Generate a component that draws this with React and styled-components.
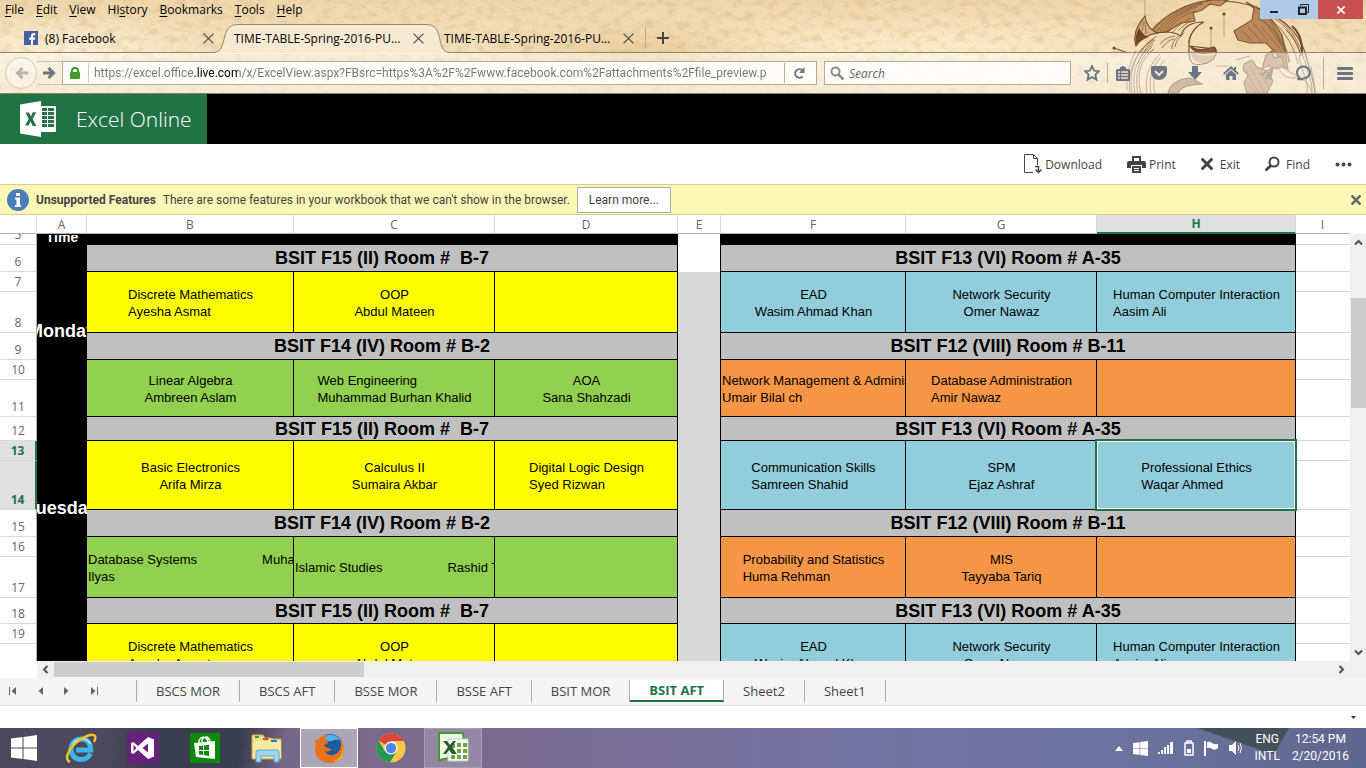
import React from "react";
import styled, { createGlobalStyle, css } from "styled-components";

const UI = `"Open Sans", "Noto Sans", sans-serif`;
const NARROW = `Roboto, "Open Sans", sans-serif`;
const GREEN = "#217346";
const COLORS = { yellow: "#ffff00", green: "#92d050", blue: "#92cddc", orange: "#f79646" };

const Global = createGlobalStyle`
  *, *::before, *::after { box-sizing: border-box; }
  body { margin: 0; background: #fff; font-family: ${UI}; font-size: 12px; color: #444; }
  button, input { font: inherit; color: inherit; }
  button { border: 0; padding: 0; background: none; }
  svg { display: block; flex: none; }
`;

const Page = styled.div`
  display: flex;
  flex-direction: column;
  height: 100vh;
  overflow: hidden;
`;

/* ---------- browser chrome ---------- */
const Chrome = styled.header`
  position: relative;
  flex: none;
  border-bottom: 1px solid #8f8063;
  background:
    radial-gradient(ellipse 160px 40px at 640px 56px, rgba(214, 164, 88, 0.3), transparent),
    radial-gradient(ellipse 160px 40px at 60px 50px, rgba(255, 248, 228, 0.6), transparent),
    radial-gradient(ellipse 300px 40px at 930px 50px, rgba(255, 244, 212, 0.6), transparent),
    linear-gradient(#efd6ac, #f3dfba 45%, #f0dcb6);
`;
const Grain = styled.svg`
  position: absolute;
  inset: 0;
  width: 100%;
  height: 100%;
`;
const Artwork = styled.svg`
  position: absolute;
  top: 0;
  right: 0;
`;
const WindowControls = styled.div`
  position: absolute;
  z-index: 2;
  top: 0;
  right: 3px;
  display: flex;
  height: 19px;
`;
const WindowButton = styled.button`
  display: grid;
  place-items: center;
  width: ${(p) => (p.$close ? 45 : 29)}px;
  background: ${(p) => (p.$close ? "#c75050" : "#aecae8")};
`;
const MenuBar = styled.nav`
  position: relative;
  display: flex;
  gap: 12px;
  height: 24px;
  padding: 2px 5px;
  color: #000;
`;
const MenuItem = styled.button`
  height: 16px;
  line-height: 16px;
  u { text-underline-offset: 2px; }
`;
const TabStrip = styled.div`
  position: relative;
  display: flex;
  height: 29px;
  padding-left: 15px;
  border-bottom: 1px solid #94866c;
  color: #000;
`;
const BrowserTab = styled.div`
  position: relative;
  display: flex;
  align-items: center;
  justify-content: space-between;
  width: 210px;
  padding: 0 11px 0 9px;
`;
const TabShape = styled.svg`
  position: absolute;
  left: -12px;
  top: 0;
`;
const TabTitle = styled.button`
  position: relative;
  display: flex;
  align-items: center;
  gap: 7px;
  white-space: nowrap;
`;
const IconButton = styled.button`
  position: relative;
  display: grid;
  place-items: center;
`;
const NewTab = styled.button`
  display: flex;
  align-items: center;
  gap: 11px;
`;
const NavBar = styled.div`
  position: relative;
  display: flex;
  align-items: center;
  height: 40px;
  padding-right: 13px;
  background: rgba(255, 255, 255, 0.45);
`;
const BackButton = styled.button`
  display: grid;
  place-items: center;
  width: 32px;
  height: 32px;
  margin-left: 5px;
  border: 1px solid #d5cab6;
  border-radius: 50%;
  background: rgba(255, 255, 255, 0.3);
`;
const Forward = styled.button`
  display: grid;
  place-items: center;
  width: 25px;
  height: 24px;
  border: solid #cfc4b0;
  border-width: 1px 0;
`;
const Field = styled.div`
  display: flex;
  align-items: center;
  height: 24px;
  border: 1px solid #b5aa96;
  background: rgba(255, 255, 255, 0.85);
`;
const UrlField = styled(Field)`
  flex: 1;
  min-width: 0;
  padding: 0 10px 0 7px;
  gap: 8px;
`;
const UrlInput = styled.input`
  flex: 1;
  min-width: 0;
  height: 20px;
  padding: 0 0 0 5px;
  border: 0;
  border-left: 1px solid #ccc;
  outline: 0;
  font-family: ${NARROW};
  color: transparent;
  background: linear-gradient(90deg, #777 0 104px, #000 104px 149px, #777 149px);
  background-clip: text;
  -webkit-background-clip: text;
`;
const SearchField = styled(Field)`
  width: 247px;
  margin-left: 7px;
  padding: 0 5px;
  gap: 5px;
`;
const SearchInput = styled.input`
  flex: 1;
  min-width: 0;
  border: 0;
  outline: 0;
  padding: 0;
  background: transparent;
  font-style: italic;
  &::placeholder { color: #666; opacity: 1; }
`;
const Tools = styled.div`
  display: flex;
  align-items: center;
  gap: 7px;
  margin-left: 13px;
  color: #6c7683;
`;
const ToolGroup = styled.div`
  display: flex;
  align-items: center;
  gap: 20px;
  margin-right: 5px;
`;
const Tool = styled(IconButton)`
  width: 16px;
  &:last-child { margin-left: ${(p) => (p.$menu ? 6 : 0)}px; }
`;
const Rule = styled.span`
  width: 1px;
  height: ${(p) => p.$h || 20}px;
  background: #b8ad99;
`;

/* ---------- Excel header ---------- */
const Brand = styled.div`
  display: flex;
  flex: none;
  height: 50px;
  background: #000;
`;
const BrandLink = styled.a`
  display: flex;
  align-items: center;
  gap: 20px;
  width: 207px;
  padding-left: 20px;
  background: ${GREEN};
  color: #fff;
  font-size: 21px;
  font-weight: 300;
  text-decoration: none;
  white-space: nowrap;
`;
const Commands = styled.div`
  display: flex;
  flex: none;
  justify-content: flex-end;
  align-items: center;
  gap: 25px;
  height: 40px;
  padding-right: 14px;
`;
const Command = styled.button`
  display: flex;
  align-items: center;
  gap: ${(p) => p.$gap || 3}px;
`;
const Notice = styled.div`
  display: flex;
  flex: none;
  align-items: center;
  height: 31px;
  padding: 0 5px 0 7px;
  border: solid #d8d282;
  border-width: 1px 0;
  background: #fcf7b6;
  gap: 7px;
  font-family: ${NARROW};
  white-space: nowrap;
`;
const Learn = styled.button`
  width: 94px;
  height: 26px;
  border: 1px solid #ababab;
  background: #fff;
`;
const Spacer = styled.span`
  flex: 1;
`;

/* ---------- worksheet ---------- */
const Sheet = styled.main`
  display: flex;
  flex: 1;
  min-height: 0;
  overflow: hidden;
`;
const Viewport = styled.div`
  flex: 1;
  min-width: 0;
  overflow: hidden;
`;
const Grid = styled.table`
  width: 100%;
  table-layout: fixed;
  border-collapse: separate;
  border-spacing: 0;
`;
const Row = styled.tr`
  height: ${(p) => p.$h}px;
`;
const head = css`
  padding: 0;
  font-weight: ${(p) => (p.$on ? 700 : 400)};
  color: ${(p) => (p.$on ? GREEN : "#666")};
  background: ${(p) => (p.$on ? "#e0e0e0" : "#fff")};
`;
const ColHead = styled.th`
  ${head}
  height: 19px;
  line-height: 17px;
  border-right: 1px solid ${(p) => (p.$last ? "transparent" : "#d9d9d9")};
  border-bottom: ${(p) => (p.$on ? `2px solid ${GREEN}` : "1px solid #b1b1b1")};
`;
const RowHead = styled.th`
  ${head}
  vertical-align: bottom;
  border-bottom: 1px solid #d9d9d9;
  border-right: ${(p) => (p.$on ? `2px solid ${GREEN}` : "1px solid #ababab")};
`;
const RowNumber = styled.div`
  display: flex;
  align-items: flex-end;
  justify-content: center;
  height: ${(p) => Math.min(p.$h - 1, 18)}px;
  overflow: hidden;
  line-height: 18px;
`;
const cellFont = css`
  font-family: "Liberation Sans", Arial, sans-serif;
  color: #000;
`;
const Day = styled.td`
  ${cellFont}
  padding: 0;
  background: #000;
  color: #fff;
  font-weight: 700;
`;
const DayText = styled.div`
  display: flex;
  align-items: flex-end;
  justify-content: center;
  height: ${(p) => (p.$clip ? 10 : 20)}px;
  overflow: hidden;
  font-size: ${(p) => (p.$clip ? 14 : 18)}px;
  line-height: ${(p) => (p.$clip ? 16 : 20)}px;
  white-space: nowrap;
`;
const Band = styled.td`
  padding: 0;
  background: #000;
`;
const Title = styled.td`
  ${cellFont}
  padding: 0;
  border: solid #000;
  border-width: 0 1px 1px 0;
  background: #c0c0c0;
  font-size: 18px;
  font-weight: 700;
  line-height: 20px;
  text-align: center;
  white-space: pre;
`;
const Cell = styled.td`
  ${cellFont}
  position: relative;
  padding: 1px 0 0 1px;
  border: solid #000;
  border-width: 0 1px 1px 0;
  background: ${(p) => COLORS[p.$color]};
  font-size: 13px;
  line-height: 17px;
  ${(p) => p.$selected && css`
    &::after {
      content: "";
      position: absolute;
      inset: -2px;
      border: 2px solid ${GREEN};
      box-shadow: inset 0 0 0 1px #fff;
    }
  `}
`;
const CellText = styled.div`
  display: flex;
  justify-content: ${(p) => (p.$align === "left" ? "flex-start" : "center")};
  overflow: hidden;
  text-align: ${(p) => (p.$align === "center" ? "center" : "left")};
  white-space: pre;
`;
const Wide = styled.span`
  display: flex;
  gap: 65px;
`;
const Gap = styled.td`
  padding: 0;
  border-right: 1px solid #000;
  background: ${(p) => (p.$shade ? "#d9d9d9" : "#fff")};
`;
const Blank = styled.td`
  padding: 0;
  border-bottom: 1px solid #d4d4d4;
`;
const VScroll = styled.div`
  display: flex;
  flex: none;
  flex-direction: column;
  align-items: center;
  justify-content: space-between;
  width: 16px;
  margin-top: 19px;
  padding: 5px 0;
  background: #f0f0f0;
`;
const VThumb = styled.div`
  width: 15px;
  height: 110px;
  margin-bottom: 189px;
  background: #cdcdcd;
`;
const HScroll = styled.div`
  display: flex;
  flex: none;
  align-items: center;
  height: 17px;
  margin-left: 37px;
  padding: 1px 20px 1px 4px;
  gap: 4px;
  background: #f0f0f0;
`;
const HThumb = styled.div`
  width: 310px;
  height: 15px;
  background: #cdcdcd;
`;
const SheetTabs = styled.div`
  display: flex;
  flex: none;
  height: 28px;
  padding-top: 2px;
  border-bottom: 1px solid #e1e1e1;
  background: #f5f5f5;
`;
const SheetNav = styled.div`
  display: flex;
  align-items: center;
  justify-content: space-between;
  width: 137px;
  height: 22px;
  padding: 0 38px 0 9px;
  border-right: 1px solid #ababab;
`;
const SheetTab = styled.button`
  height: 22px;
  padding: 0 19px;
  border-right: 1px solid #ababab;
  font-size: 13px;
  line-height: 20px;
  ${(p) => p.$on && css`
    border-bottom: 2px solid ${GREEN};
    background: #fff;
    color: ${GREEN};
    font-weight: 700;
  `}
`;
const Status = styled.div`
  display: flex;
  flex: none;
  align-items: center;
  justify-content: flex-end;
  height: 22px;
  padding-right: 10px;
`;

/* ---------- taskbar ---------- */
const Taskbar = styled.footer`
  position: relative;
  display: flex;
  flex: none;
  align-items: stretch;
  justify-content: space-between;
  height: 40px;
  background:
    linear-gradient(100deg, rgba(72, 70, 88, 0.9) 0 110px, rgba(52, 58, 72, 0.9) 150px 240px, transparent 285px),
    linear-gradient(90deg, #6d6480, #7a6a8c 30%, #7572a0 60%, #6d74a0 80%, #5f668e);
  &::before {
    content: "";
    position: absolute;
    top: 0;
    right: 77px;
    width: 92px;
    height: 26px;
    background: #44505c;
    clip-path: polygon(0 0, 100% 0, 84% 100%, 76% 92%);
  }
`;
const Apps = styled.div`
  display: flex;
  gap: 4px;
`;
const AppButton = styled.button`
  display: grid;
  place-items: center;
  width: ${(p) => (p.$start ? 48 : 58)}px;
  ${(p) => p.$open && css`
    border: 1px solid ${p.$active ? "#fff" : "#a29fb4"};
    background: ${p.$active ? "rgba(255,255,255,.4)" : "rgba(255,255,255,.2)"};
  `}
`;
const Tray = styled.div`
  position: relative;
  display: flex;
  align-items: center;
  gap: 10px;
  padding-right: 17px;
  color: #fff;
  font-family: ${NARROW};
`;
const TrayText = styled.div`
  line-height: 17px;
  text-align: center;
  padding-left: 2px;
`;

/* ---------- icons ---------- */
const Cross = ({ s = 11, w = 1, c = "#444" }) => (
  <svg width={s} height={s} viewBox="0 0 10 10" stroke={c} strokeWidth={w} fill="none"><path d="M.5.5l9 9M9.5.5l-9 9" /></svg>
);
const Arrow = ({ flip, c }) => (
  <svg width="13" height="12" viewBox="0 0 13 12" fill="none" stroke={c} strokeWidth="3">
    {flip ? <path d="M13 6H3M7.500 1l-5 5 5 5" /> : <path d="M0 6h10M5.500 1l5 5-5 5" />}
  </svg>
);
const Chevron = ({ r = 0 }) => (
  <svg width="9" height="7" viewBox="0 0 9 7" fill="none" stroke="#505050" strokeWidth="2" transform={`rotate(${r})`}><path d="M1 5.500l3.500-3.500L8 5.500" /></svg>
);
const Triangle = ({ left, bar }) => (
  <svg width="8" height="8" viewBox="0 0 8 8" fill="#666">
    {left ? <path d="M7 0v8L2.500 4z" /> : <path d="M1 0v8l4.500-4z" />}
    {bar && <rect x={left ? 0 : 7} width="1" height="8" />}
  </svg>
);
const WinLogo = ({ s }) => (
  <svg width={s} height={s} viewBox="0 0 26 26" fill="#fff">
    <path d="M0 3.500L11.500 2v10.500H0zM12.500 1.900L26 0v12.500H12.500zM0 13.500h11.500V24L0 22.500zM12.500 13.500H26V26l-13.500-1.900z" />
  </svg>
);

function Paper() {
  return (
    <Grain aria-hidden="true">
      <filter id="grain" x="0" y="0" width="100%" height="100%">
        <feTurbulence type="fractalNoise" baseFrequency="0.09 0.14" numOctaves="5" seed="7" />
        <feColorMatrix values="0 0 0 0 .62  0 0 0 0 .42  0 0 0 0 .18  1 0 0 0 -.46" />
      </filter>
      <rect width="100%" height="100%" filter="url(#grain)" />
    </Grain>
  );
}

function Globe() {
  return (
    <Artwork width="260" height="93" viewBox="1106 0 260 93" fill="none" stroke="#7d5431" strokeWidth="1.100" aria-hidden="true">
      <path d="M1136 93c-3-22 4-45 21-60C1176 10 1200 0 1224 0h30c30 8 52 28 52 60v33z" fill="#f3dcb4" fillOpacity=".5" stroke="none" />
      <path d="M1150 32C1164 14 1190 1 1214 0h14l-8 6-10-2-8 6-9 3 2 8-14 2-14 9-16 1z" fill="#c08d5a" />
      <path d="M1154 29c14-15 32-25 54-28M1157 31c12-15 27-24 46-28M1160 31c12-14 26-23 42-27M1164 31c9-12 20-20 33-24M1167 31c8-10 17-17 29-20M1173 32c5-6 11-11 18-14M1178 31c4-4 8-8 14-10" strokeWidth=".7" />
      <path d="M1224 1c22 1 44 9 61 22 11 9 18 20 22 36 3 14 7 22 8 34" />
      <path d="M1246 2l8 6-2 12-8 5-10 6 4 9 12 3 16 0 10 10 6 14 6 2-6-34-14-21z" fill="#b8895c" />
      <path d="M1250 5l12 12M1256 5l14 18M1254 24l14 17M1248 27l14 15M1242 31l10 10M1262 28l18 20M1264 20l18 26M1270 20l14 30" strokeWidth=".6" />
      <path d="M1258 18c16 9 28 25 31 45M1262 14c17 9 31 27 36 50M1270 14c19 9 30 28 34 46M1282 36l8 26M1272 17c16 9 25 24 29 39M1286 30c8 8 13 17 15 26" strokeWidth=".8" />
      <path d="M1292 26c8 7 11 18 10 28" stroke="#6f4626" strokeWidth="2" />
      <path d="M1136 46c-3-10 0-20 9-30 1 9 5 13 12 17-10 2-16 6-21 13z" fill="#d7b182" stroke="#6f4626" />
      <path d="M1136 45c-1-7 0-12 3-17 3 4 5 8 10 9-6 2-10 4-13 8z" fill="#6f4626" stroke="none" />
      <path d="M1139 28l4-9M1142 31l2-10M1146 34l-1-12" strokeWidth=".7" />
      <path d="M1157 33c9-2 16-2 24 3 2-8 9-14 23-14-12 6-16 17-15 24l26 3c4 4-2 14-13 15-9 2-14 0-13-18" stroke="#6f4626" />
      <path d="M1190 46c6 5 15 4 24 1 4 3 1 6-3 6-8 1-16 1-21-7z" fill="#8a5a38" stroke="#6f4626" />
      <path d="M1191 51c0 8 4 12 12 12 6 0 11-5 12-9-8 3-17 2-24-3z" fill="#c9a27a" stroke="none" />
      <path d="M1130 93c-3-22 5-43 27-57M1132 93c-4-20 3-41 22-54M1135 93c-4-21 2-36 18-49M1138 93c-4-19 1-34 14-46M1141 93c-5-19 0-34 13-44M1147 93c-3-16 3-29 13-39M1151 93c-3-14 1-26 10-36M1155 93c-4-12 1-24 10-33M1138 64c3-10 9-18 17-24M1127 90c-1-12 2-27 9-39M1180 35c-6 4-8 9-8 14M1184 33c-6 5-8 9-9 14M1196 28c-5 5-7 11-7 16M1199 25c-6 5-9 11-10 17M1160 44c4-5 9-7 15-8M1162 48c4-5 7-8 12-9" strokeWidth=".8" />
      <path d="M1168 93c2-9 10-14 22-15l12 6-10 1c-8 1-12 4-14 8z" fill="#a98262" />
      <path d="M1266 55l6-4 2 7 8-2 2 10-8 3-8-3-6 3zM1244 64l8-4 5 7 10 4 6 10-6 12h-20l-3-10 4-8-5-5z" fill="#bd946e" stroke="#8a5f38" />
      <path d="M1250 66l14 26M1246 70l12 22M1256 66l14 24M1248 84l8 9" strokeWidth=".5" />
      <path d="M1299 55c2 17 10 25 8 38M1305 60c2 14 8 22 7 33M1311 66c1 12 5 18 4 27M1276 66c6 8 10 12 16 12 8-1 16 2 20 14M1280 64c6 6 12 10 18 12M1216 66l12 0M1236 60l14-4" strokeWidth=".8" />
      <path d="M1145 0v16M1211 28v22M1224 15v22" stroke="#a8865d" strokeWidth=".7" />
      <g fill="#6f4626" stroke="none"><circle cx="1211" cy="28" r="1.500" /><circle cx="1224" cy="14" r="1.500" /><circle cx="1114" cy="48" r="1.500" /></g>
      <path d="M1114 48l14 5" />
    </Artwork>
  );
}

/* ---------- timetable data ---------- */
const t = (a, b, align = "center") => ({ lines: [a, b], align });
const none = null;
const f15 = "BSIT F15 (II) Room #  B-7";
const f14 = "BSIT F14 (IV) Room # B-2";
const f13 = "BSIT F13 (VI) Room # A-35";
const f12 = "BSIT F12 (VIII) Room # B-11";
const monF15 = [t("Discrete Mathematics", "Ayesha Asmat", "block"), t("OOP", "Abdul Mateen"), none];
const monF13 = [t("EAD", "Wasim Ahmad Khan"), t("Network Security", "Omer Nawaz"), t("Human Computer Interaction", "Aasim Ali", "block")];

const BLOCKS = [
  { n: 6, h: [27, 20, 41], titles: [f15, f13], colors: ["yellow", "blue"], cells: [monF15, monF13], day: "Monday" },
  {
    n: 9, h: [27, 20, 37], titles: [f14, f12], colors: ["green", "orange"],
    cells: [
      [t("Linear Algebra", "Ambreen Aslam"), t("Web Engineering", "Muhammad Burhan Khalid", "block"), t("AOA", "Sana Shahzadi")],
      [t("Network Management & Administ", "Umair Bilal ch", "left"), t("Database Administration", "Amir Nawaz", "block"), none],
    ],
  },
  {
    n: 12, h: [24, 20, 49], titles: [f15, f13], colors: ["yellow", "blue"], day: "Tuesday", selected: true,
    cells: [
      [t("Basic Electronics", "Arifa Mirza"), t("Calculus II", "Sumaira Akbar"), t("Digital Logic Design", "Syed Rizwan", "block")],
      [t("Communication Skills", "Samreen Shahid", "block"), t("SPM", "Ejaz Ashraf"), t("Professional Ethics", "Waqar Ahmed", "block")],
    ],
  },
  {
    n: 15, h: [27, 20, 41], titles: [f14, f12], colors: ["green", "orange"],
    cells: [
      [
        { lines: [<Wide key="w"><span>Database Systems</span><span>Muha</span></Wide>, "Ilyas"], align: "left" },
        { lines: [<Wide key="w"><span>Islamic Studies</span><span>Rashid T</span></Wide>], align: "left" },
        none,
      ],
      [t("Probability and Statistics", "Huma Rehman", "block"), t("MIS", "Tayyaba Tariq"), none],
    ],
  },
  { n: 18, h: [26, 20, 41], titles: [f15, f13], colors: ["yellow", "blue"], cells: [monF15, monF13], day: "" },
];
const COLS = ["A", "B", "C", "D", "E", "F", "G", "H", "I"];
const WIDTHS = [37, 50, 207, 201, 183, 43, 185, 191, 199];

function Entry({ data, color, selected }) {
  return (
    <Cell rowSpan={2} $color={color} $selected={selected}>
      {data && (
        <CellText $align={data.align}>
          <div>{data.lines.map((line, i) => <div key={i}>{line}</div>)}</div>
        </CellText>
      )}
    </Cell>
  );
}

function NumberCell({ n, h, on }) {
  const empty = n === 20;
  return <RowHead scope="row" $on={on}><RowNumber $h={h}>{empty ? "" : n}</RowNumber></RowHead>;
}

function Block({ b, first }) {
  const [h0, h1, h2] = b.h;
  return (
    <>
      <Row $h={h0}>
        <NumberCell n={b.n} h={h0} />
        {b.day !== undefined && <Day rowSpan={b.day ? 6 : 3}><DayText>{b.day}</DayText></Day>}
        <Title colSpan={3}>{b.titles[0]}</Title>
        {first && <Gap />}
        <Title colSpan={3}>{b.titles[1]}</Title>
        <Blank />
      </Row>
      <Row $h={h1}>
        <NumberCell n={b.n + 1} h={h1} on={b.selected} />
        {b.cells[0].map((c, i) => <Entry key={i} data={c} color={b.colors[0]} />)}
        {first && <Gap $shade rowSpan={14} />}
        {b.cells[1].map((c, i) => <Entry key={i} data={c} color={b.colors[1]} selected={b.selected && i === 2} />)}
        <Blank />
      </Row>
      <Row $h={h2}>
        <NumberCell n={b.n + 2} h={h2} on={b.selected} />
        <Blank />
      </Row>
    </>
  );
}

function Worksheet() {
  return (
    <Grid>
      <colgroup>
        {WIDTHS.map((w, i) => <col key={i} width={w} />)}
        <col />
      </colgroup>
      <thead>
        <tr>
          <ColHead as="td" />
          {COLS.map((c) => <ColHead key={c} scope="col" $on={c === "H"} $last={c === "I"}>{c}</ColHead>)}
        </tr>
      </thead>
      <tbody>
        <Row $h={11}>
          <NumberCell n={5} h={11} />
          <Day><DayText $clip>Time</DayText></Day>
          <Band colSpan={3} />
          <Gap />
          <Band colSpan={3} />
          <Blank />
        </Row>
        {BLOCKS.map((b, i) => <Block key={b.n} b={b} first={i === 0} />)}
      </tbody>
    </Grid>
  );
}

function BrowserChrome() {
  const menus = ["File", "Edit", "View", "Hi|story", "Bookmarks", "Tools", "Help"];
  return (
    <Chrome>
      <Paper />
      <Globe />
      <WindowControls>
        <WindowButton aria-label="Minimize"><svg width="9" height="9"><rect y="6" width="8" height="2" fill="#222" /></svg></WindowButton>
        <WindowButton aria-label="Restore"><svg width="11" height="11" fill="none" stroke="#222"><path d="M2.500 2V.5h8v8H9" /><path d="M1 3.500h7v6.500H1z" strokeWidth="2" /></svg></WindowButton>
        <WindowButton $close aria-label="Close"><Cross s={8} w={2} c="#fff" /></WindowButton>
      </WindowControls>
      <MenuBar>
        {menus.map((m) => {
          const [a, b] = m.includes("|") ? m.split("|") : ["", m];
          return <MenuItem key={m}>{a}<u>{b[0]}</u>{b.slice(1)}</MenuItem>;
        })}
      </MenuBar>
      <TabStrip>
        <BrowserTab>
          <TabTitle>
            <svg width="14" height="14"><rect width="14" height="14" fill="#4460a0" /><path d="M9 14V8.700h1.900l.3-2.100H9V5.300c0-.7.200-1.100 1.200-1.100h1.100V2.200c-2.600-.4-4.300.3-4.300 2.700v1.700H5.200v2.100H7V14z" fill="#fff" /></svg>
            (8) Facebook
          </TabTitle>
          <IconButton aria-label="Close tab"><Cross /></IconButton>
        </BrowserTab>
        <BrowserTab>
          <TabShape width="237" height="30" viewBox="0 0 237 30" aria-hidden="true">
            <path d="M0 28.500C16 28.500 6 .5 24 .5h190c18 0 8 28 23 28V30H0z" fill="#f6ead3" />
            <path d="M0 28.500C16 28.500 6 .5 24 .5h190c18 0 8 28 23 28" fill="none" stroke="#94866c" />
          </TabShape>
          <TabTitle>TIME-TABLE-Spring-2016-PU...</TabTitle>
          <IconButton aria-label="Close tab"><Cross /></IconButton>
        </BrowserTab>
        <BrowserTab>
          <TabTitle>TIME-TABLE-Spring-2016-PU...</TabTitle>
          <IconButton aria-label="Close tab"><Cross /></IconButton>
        </BrowserTab>
        <NewTab aria-label="New tab"><Rule $h={22} /><svg width="12" height="12"><path d="M6 0v12M0 6h12" stroke="#444" strokeWidth="2" /></svg></NewTab>
      </TabStrip>
      <NavBar>
        <BackButton aria-label="Back"><Arrow flip c="#b9b4ab" /></BackButton>
        <Forward aria-label="Forward"><Arrow c="#6c7683" /></Forward>
        <UrlField>
          <svg width="10" height="12"><path d="M2 6V4a3 3 0 0 1 6 0v2" fill="none" stroke="#3f9c2b" strokeWidth="2" /><rect y="5" width="10" height="7" rx="1" fill="#3f9c2b" /></svg>
          <UrlInput aria-label="Address" defaultValue="https://excel.office.live.com/x/ExcelView.aspx?FBsrc=https%3A%2F%2Fwww.facebook.com%2Fattachments%2Ffile_preview.p" />
          <Rule />
          <IconButton aria-label="Reload">
            <svg width="13" height="13" viewBox="0 0 13 13"><path d="M9.500 9.500A4.300 4.300 0 1 1 9.300 3.200" fill="none" stroke="#777" strokeWidth="2" /><path d="M11.500 0v6H6z" fill="#777" /></svg>
          </IconButton>
        </UrlField>
        <SearchField>
          <svg width="14" height="14" fill="none" stroke="#8a8a8a"><circle cx="5.500" cy="5.500" r="4" strokeWidth="2" /><path d="M8.500 8.500l5 5" strokeWidth="2.500" /></svg>
          <SearchInput aria-label="Search" placeholder="Search" />
        </SearchField>
        <Tools>
          <Tool aria-label="Bookmark"><svg width="16" height="16" viewBox="1 1 16 16" fill="none" stroke="currentColor" strokeWidth="1.800"><path d="M9 2l2.100 4.600 5 .6-3.700 3.400 1 5L9 13.100l-4.400 2.500 1-5L1.900 7.200l5-.6z" /></svg></Tool>
          <Rule />
          <ToolGroup>
            <Tool aria-label="Bookmarks list"><svg width="14" height="15" fill="currentColor"><path d="M1 3h3V1h2V0h2v1h2v2h3l1 1v10l-1 1H1l-1-1V4z" /><path d="M2 6h2M5 6h7M2 9h2M5 9h7M2 12h2M5 12h7" stroke="#f2e4cb" strokeWidth="1.500" /></svg></Tool>
            <Tool aria-label="Pocket"><svg width="16" height="15"><path d="M2 0h12q2 0 2 2v4a8 8 0 0 1-16 0V2q0-2 2-2z" fill="currentColor" /><path d="M4 5l4 4 4-4" fill="none" stroke="#f2e4cb" strokeWidth="2" /></svg></Tool>
            <Tool aria-label="Downloads"><svg width="14" height="14" fill="currentColor"><path d="M4 0h6v6h4l-7 8-7-8h4z" /></svg></Tool>
            <Tool aria-label="Home"><svg width="16" height="15" fill="currentColor"><path d="M8 0l8 7.500-1.200 1.200L8 2.800 1.200 8.700 0 7.500zM13 1v4l-2-2V1z" /><path d="M8 4l5 4.500V14H9.500v-4h-3v4H3V8.500z" /></svg></Tool>
            <Tool aria-label="Share"><svg width="16" height="15" fill="#b9ae9e"><path d="M15 0L0 9l4 1 8-7-6 8v4l3-3 3 2z" /></svg></Tool>
            <Tool aria-label="Chat"><svg width="17" height="16" fill="none" stroke="currentColor" strokeWidth="2"><path d="M2.500 14c2-.3 2-1 2-1.700A6.500 6 0 1 1 8.500 13.500c-2 1-4 1-6 .5z" /></svg></Tool>
          </ToolGroup>
          <Rule $h={32} />
          <Tool $menu aria-label="Menu"><svg width="16" height="13" fill="currentColor"><rect width="16" height="3" rx="1" /><rect y="5" width="16" height="3" rx="1" /><rect y="10" width="16" height="3" rx="1" /></svg></Tool>
        </Tools>
      </NavBar>
    </Chrome>
  );
}

const SHEETS = ["BSCS MOR", "BSCS AFT", "BSSE MOR", "BSSE AFT", "BSIT MOR", "BSIT AFT", "Sheet2", "Sheet1"];

export default function App() {
  return (
    <Page>
      <Global />
      <BrowserChrome />
      <Brand>
        <BrandLink href="#">
          <svg width="36" height="36" viewBox="0 0 36 36">
            <path d="M20 5h15q1 0 1 1v24q0 1-1 1H20z" fill="#fff" />
            <path d="M22 8.500h5M28 8.500h6M22 12.500h5M28 12.500h6M22 16.500h5M28 16.500h6M22 20.500h5M28 20.500h6M22 24.500h5M28 24.500h6" stroke={GREEN} strokeWidth="3" />
            <path d="M0 3.500L21 0v36L0 32.500z" fill="#fff" />
            <path d="M5.500 11.500h3.600l1.700 3.900 2-4.200h3.400L12.700 18l3.700 7h-3.700l-2.100-4.400-2.100 4H5L8.700 18z" fill={GREEN} />
          </svg>
          Excel Online
        </BrandLink>
      </Brand>
      <Commands>
        <Command><svg width="18" height="20" fill="none" stroke="#444"><path d="M9 18.500H.5V.5h9l4 4V11M9.500.5v4h4" /><path d="M11 12.500h3.500V18M11.500 15.500l3 3 3-3" strokeWidth="1.500" /></svg>Download</Command>
        <Command><svg width="19" height="17" fill="#444"><path d="M5 0h9v5h-2V2H7v3H5zM2 5h15q2 0 2 2v5h-4V9H4v3H0V7q0-2 2-2zM5 10h9v7H5zM7 12v1h5v-1zM7 14v1h5v-1z" fillRule="evenodd" /></svg>Print</Command>
        <Command $gap={7}><Cross s={12} w={2.5} />Exit</Command>
        <Command $gap={6}><svg width="15" height="16" fill="none" stroke="#444" strokeWidth="2"><circle cx="9" cy="6" r="4.500" /><path d="M6 9.500l-5.500 5" strokeWidth="3" /></svg>Find</Command>
        <Command aria-label="More"><svg width="17" height="5" fill="#444"><circle cx="2.500" cy="2.500" r="2" /><circle cx="8.500" cy="2.500" r="2" /><circle cx="14.500" cy="2.500" r="2" /></svg></Command>
      </Commands>
      <Notice role="status">
        <svg width="22" height="22"><circle cx="11" cy="11" r="11" fill="#4a7ebb" /><path d="M9 4h4v3H9zM8 8.500h5V16h1v2H8v-2h1.500v-5.500H8z" fill="#fff" /></svg>
        <strong>Unsupported Features</strong>
        <span>There are some features in your workbook that we can't show in the browser.</span>
        <Learn>Learn more...</Learn>
        <Spacer />
        <IconButton aria-label="Dismiss"><Cross s={10} w={2.5} c="#666" /></IconButton>
      </Notice>
      <Sheet>
        <Viewport><Worksheet /></Viewport>
        <VScroll><Chevron /><VThumb /><Chevron r={180} /></VScroll>
      </Sheet>
      <HScroll><Chevron r={270} /><HThumb /><Spacer /><Chevron r={90} /></HScroll>
      <SheetTabs>
        <SheetNav>
          <IconButton aria-label="First sheet"><Triangle left bar /></IconButton>
          <IconButton aria-label="Previous sheet"><Triangle left /></IconButton>
          <IconButton aria-label="Next sheet"><Triangle /></IconButton>
          <IconButton aria-label="Last sheet"><Triangle bar /></IconButton>
        </SheetNav>
        {SHEETS.map((s) => <SheetTab key={s} $on={s === "BSIT AFT"}>{s}</SheetTab>)}
      </SheetTabs>
      <Status><svg width="5" height="3"><path d="M0 0h5L2.500 3z" fill="#333" /></svg></Status>
      <Taskbar>
        <Apps>
          <AppButton $start aria-label="Start"><WinLogo s={26} /></AppButton>
          <AppButton aria-label="Internet Explorer">
            <svg width="32" height="32" viewBox="0 0 32 32" fill="none">
              <path d="M25.500 21.500c-2 4-5.500 6-9.500 6-6 0-10-4.500-10-10.500S10.500 7 16 7c6 0 10 4 9.800 11H11" stroke="#3db5ea" strokeWidth="5" />
              <path d="M25.500 12c-2-4-6-5.500-10-5-4 .6-7 3-8 6" stroke="#a5e2fa" strokeWidth="2" />
              <path d="M5 30c-6-2-2-13 7-20C20 3.500 28 1 30 4c1 2 0 4-1 6" stroke="#f5c326" strokeWidth="2.500" />
            </svg>
          </AppButton>
          <AppButton aria-label="Visual Studio">
            <svg width="32" height="32"><rect width="32" height="32" fill="#68217a" /><path d="M21 5l6 2.500v17L21 27 11 18l-4.500 4L4 21V11l2.500-1 4.500 4zM21 11.500L15.500 16l5.500 4.500zM6.500 13v6l3-3z" fill="#fff" fillRule="evenodd" /></svg>
          </AppButton>
          <AppButton aria-label="Store">
            <svg width="30" height="30"><rect width="30" height="30" fill="#0a8a0a" /><path d="M4 10l21-2v18L6 24z" fill="#fff" /><path d="M9 10c-1-6 8-9 9-1M12 9c0-6 7-7 8 0" fill="none" stroke="#fff" strokeWidth="1.500" /><path d="M9 13l4-.5V17H9zM14 12.400l5-.6V17h-5zM9 18h4v4l-4-.4zM14 18h5v5l-5-.7z" fill="#0a8a0a" /></svg>
          </AppButton>
          <AppButton aria-label="File Explorer">
            <svg width="32" height="32"><path d="M1 3h11l2 3h6l2 1h8v20H1z" fill="#f2dc86" stroke="#c9a94a" /><path d="M2 9h28v17H2z" fill="#f8e9a4" /><path d="M4 4h4v2H4z" fill="#1ca838" /><path d="M12 6h5v2h-5z" fill="#d34a2c" /><path d="M20 8h6v2h-6z" fill="#2b7fd0" /><path d="M5 30V20q0-2 2-2h19q2 0 2 2v10h-5v-6H10v6z" fill="#9ed6f0" stroke="#5ba6ce" /></svg>
          </AppButton>
          <AppButton $open $active aria-label="Firefox">
            <svg width="32" height="32"><circle cx="17" cy="15" r="13" fill="#1c5c9e" /><path d="M9 5c6-4 15-3 19 4-6-4-9 2-14 0z" fill="#53b5e6" /><path d="M2 8c0 2 0 3 1 4C-1 22 6 31 17 31c9 0 14-7 14-14 0-5-2-8-4-10 2 5 1 10-1 12-3 5-11 6-14 0 3 1 5 0 7-2-3 0-5-2-8-3 0-2 2-2 4-3 0-2-2-3-3-4l1-4c-3 0-5 1-7 4z" fill="#e8731c" /><path d="M28 9c4 8 1 18-8 20 10 1 13-12 8-20z" fill="#f9c32c" /></svg>
          </AppButton>
          <AppButton aria-label="Chrome">
            <svg width="30" height="30" viewBox="0 0 30 30"><circle cx="15" cy="15" r="14.500" fill="#fbc746" /><path d="M15 15L2.500 7.500A14.500 14.500 0 0 1 27.600 8H15z" fill="#db4437" /><path d="M2.500 7.500A14.500 14.500 0 0 0 14 29.500l6.500-11L15 15 9 18.500z" fill="#229a55" /><circle cx="15" cy="15" r="6.500" fill="#fff" /><circle cx="15" cy="15" r="5.200" fill="#4a86e8" /></svg>
          </AppButton>
          <AppButton $open aria-label="Excel">
            <svg width="32" height="32"><path d="M2 1h24l2 22-26 5z" fill="#eef8e4" stroke="#3f9a2f" strokeWidth="2" /><path d="M11 7h20v22H11z" fill="#fff" stroke="#b7cfae" /><path d="M14 12h4v4h-4zM20 11h4v4h-4zM26 11h4v4h-4zM20 17h4v4h-4zM26 17h4v4h-4zM14 23h4v4h-4zM20 23h4v4h-4zM26 23h4v4h-4z" fill="#6ba843" /><path d="M6 9h4l3 4 3-4h3l-4 6 5 7h-5l-3-4-3 4H6l5-7z" fill="#245d24" /></svg>
          </AppButton>
        </Apps>
        <Tray>
          <svg width="8" height="5"><path d="M0 5l4-5 4 5z" fill="#fff" /></svg>
          <WinLogo s={15} />
          <svg width="16" height="13" fill="#fff"><path d="M0 10h2v2H0zM3 8h2v4H3zM6 5h2v7H6zM9 3h2v9H9zM12 0h3v12h-3z" /></svg>
          <svg width="10" height="16"><path d="M1 3h8v12H1zM3 1h4v2H3z" fill="none" stroke="#fff" strokeWidth="1.500" /><path d="M3 9h4v4H3z" fill="#fff" /></svg>
          <svg width="15" height="15" fill="#fff"><path d="M0 0h2v15H0zM3 1q3-1 5 1 3 2 6 1v4q-3 3-6 1-2-2-5-1z" /></svg>
          <svg width="14" height="14"><path d="M0 4h3l4-4v14L3 10H0z" fill="#fff" /><path d="M9 4q2 3 0 6M11 2q3 5 0 10" fill="none" stroke="#fff" /></svg>
          <TrayText>ENG<br />INTL</TrayText>
          <TrayText>12:54 PM<br />2/20/2016</TrayText>
        </Tray>
      </Taskbar>
    </Page>
  );
}
